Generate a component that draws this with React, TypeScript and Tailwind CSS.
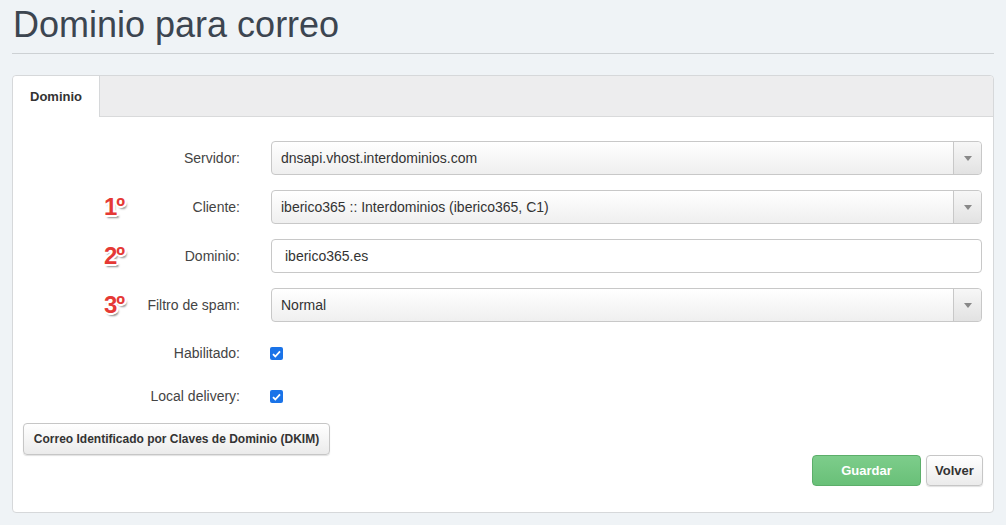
import React from 'react';

const font = "font-['Liberation_Sans',Arial,sans-serif]";

const Badge: React.FC<{ n: string }> = ({ n }) => (
  <span className="absolute left-[91px] top-1/2 -translate-y-1/2 text-[24px] font-bold leading-none text-[#e53935] tracking-[-1px] [text-shadow:-2px_0_0_#fff,2px_0_0_#fff,0_-2px_0_#fff,0_2px_0_#fff,-1px_-1px_0_#fff,1px_1px_0_#fff,-1px_1px_0_#fff,1px_-1px_0_#fff,-2px_-1px_0_#fff,2px_1px_0_#fff,2px_3px_2px_rgba(0,0,0,0.45)]">
    {n}
  </span>
);

const Select: React.FC<{ value: string }> = ({ value }) => (
  <div className="flex h-[34px] flex-1 items-stretch rounded-[4px] border border-[#c8c8c8] bg-gradient-to-b from-white to-[#efefef] text-[14px] text-[#333]">
    <div className="flex flex-1 items-center pl-[9px]">{value}</div>
    <div className="flex w-[28px] items-center justify-center border-l border-[#c8c8c8] bg-gradient-to-b from-[#f7f7f7] to-[#e2e2e2] rounded-r-[4px]">
      <svg width="8" height="5" viewBox="0 0 8 5"><path d="M0 0h8L4 5z" fill="#888" /></svg>
    </div>
  </div>
);

const Row: React.FC<{ label: string; badge?: string; children: React.ReactNode }> = ({ label, badge, children }) => (
  <div className="relative flex items-center">
    {badge && <Badge n={badge} />}
    <div className="w-[228px] pr-[1px] text-right text-[14px] text-[#444]">{label}</div>
    <div className="ml-[30px] mr-[11px] flex flex-1 items-center">{children}</div>
  </div>
);

const Check = () => (
  <span className="-ml-[1px] flex h-[13px] w-[13px] items-center justify-center rounded-[2px] bg-[#1a73e8]">
    <svg width="9" height="8" viewBox="0 0 9 8"><path d="M1 4.2l2.3 2.3L8 1.3" stroke="#fff" strokeWidth="1.8" fill="none" /></svg>
  </span>
);

export default function App() {
  return (
    <div className={`${font} min-h-[525px] w-[1006px] bg-[#eff3f6] px-[12px] pt-[3px]`}>
      <h1 className="pl-[1px] text-[36px] leading-[44px] text-[#3c4550]">Dominio para correo</h1>
      <div className="mt-[6px] border-b border-[#cdd1d4]" />

      <div className="mt-[21px] h-[438px] rounded-[4px] border border-[#d6d8da] bg-white">
        <div className="flex h-[41px] rounded-t-[4px] bg-[#ededee]">
          <div className="flex w-[87px] items-center justify-center rounded-tl-[4px] border-r border-[#d6d8da] bg-white text-[13px] font-bold text-[#333]">
            Dominio
          </div>
          <div className="flex-1 border-b border-[#d9dadb]" />
        </div>

        <div className="flex flex-col gap-[15px] pt-[24px]">
          <Row label="Servidor:">
            <Select value="dnsapi.vhost.interdominios.com" />
          </Row>
          <Row label="Cliente:" badge="1º">
            <Select value="iberico365 :: Interdominios (iberico365, C1)" />
          </Row>
          <Row label="Dominio:" badge="2º">
            <div className="flex h-[34px] flex-1 items-center rounded-[4px] border border-[#c8c8c8] bg-white pl-[13px] text-[14px] text-[#333]">
              iberico365.es
            </div>
          </Row>
          <Row label="Filtro de spam:" badge="3º">
            <Select value="Normal" />
          </Row>
        </div>

        <div className="mt-[21px] flex flex-col gap-[22px]">
          <Row label="Habilitado:"><Check /></Row>
          <Row label="Local delivery:"><Check /></Row>
        </div>

        <div className="ml-[10px] mt-[16px] flex">
          <button className="h-[32px] w-[307px] rounded-[4px] border border-[#c6c6c6] bg-gradient-to-b from-white to-[#ebebeb] text-[12px] font-bold text-[#333] shadow-[0_1px_1px_rgba(0,0,0,0.12)]">
            Correo Identificado por Claves de Dominio (DKIM)
          </button>
        </div>

        <div className="mr-[10px] mt-0 flex justify-end gap-[5px]">
          <button className="h-[31px] w-[109px] rounded-[4px] border border-[#5cae6a] bg-gradient-to-b from-[#7dcd8b] to-[#69c078] text-[13px] font-bold text-white">
            Guardar
          </button>
          <button className="h-[31px] w-[57px] rounded-[4px] border border-[#c6c6c6] bg-gradient-to-b from-white to-[#ebebeb] text-[13px] font-bold text-[#333] shadow-[0_1px_1px_rgba(0,0,0,0.12)]">
            Volver
          </button>
        </div>
      </div>
    </div>
  );
}
